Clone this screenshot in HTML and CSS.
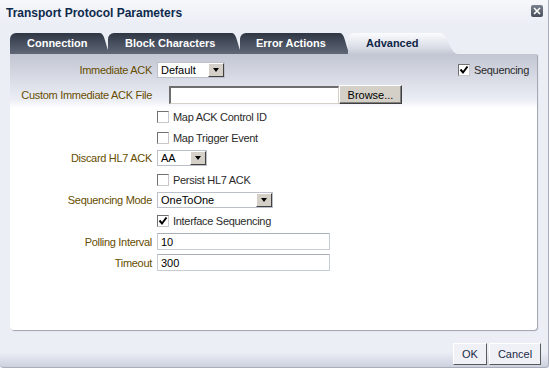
FILE: index.html
```html
<!DOCTYPE html>
<html lang="en">
<head>
  <meta charset="UTF-8" />
  <title>Transport Protocol Parameters</title>
  <link rel="stylesheet" href="styles.css">
</head>
<body>
  <div class="dialog">
    <div class="titlebar">
      <span class="title">Transport Protocol Parameters</span>
      <span class="close">
        <svg width="8" height="8" viewBox="0 0 8 8"><path d="M1 1 L7 7 M7 1 L1 7" stroke="#fff" stroke-width="1.6"/></svg>
      </span>
    </div>

    <div class="tabs">
      <div class="tab t-conn">Connection</div>
      <div class="tab t-block">Block Characters</div>
      <div class="tab t-err">Error Actions</div>
      <div class="tab t-adv active">Advanced</div>
    </div>

    <div class="panel">
      <div class="row first">
        <div class="label">Immediate ACK</div>
        <div class="select w-default"><span class="val">Default</span><span class="drop"><i class="arrow"></i></span></div>
        <div class="spacer"></div>
        <label class="check"><span class="cb on"><svg width="10" height="10" viewBox="0 0 10 10"><path d="M1.5 4.5 L4 7.5 L8.5 1.5" fill="none" stroke="#000" stroke-width="2"/></svg></span>Sequencing</label>
      </div>
      <div class="row r2">
        <div class="label">Custom Immediate ACK File</div>
        <input class="file" type="text" value="">
        <button class="browse">Browse...</button>
      </div>
      <div class="row r3 indent">
        <label class="check"><span class="cb"></span>Map ACK Control ID</label>
      </div>
      <div class="row indent">
        <label class="check"><span class="cb"></span>Map Trigger Event</label>
      </div>
      <div class="row up">
        <div class="label">Discard HL7 ACK</div>
        <div class="select w-aa"><span class="val">AA</span><span class="drop"><i class="arrow"></i></span></div>
      </div>
      <div class="row down indent">
        <label class="check"><span class="cb"></span>Persist HL7 ACK</label>
      </div>
      <div class="row up">
        <div class="label">Sequencing Mode</div>
        <div class="select w-mode"><span class="val">OneToOne</span><span class="drop"><i class="arrow"></i></span></div>
      </div>
      <div class="row indent">
        <label class="check"><span class="cb on"><svg width="10" height="10" viewBox="0 0 10 10"><path d="M1.5 4.5 L4 7.5 L8.5 1.5" fill="none" stroke="#000" stroke-width="2"/></svg></span>Interface Sequencing</label>
      </div>
      <div class="row">
        <div class="label">Polling Interval</div>
        <input class="text" type="text" value="10">
      </div>
      <div class="row">
        <div class="label">Timeout</div>
        <input class="text" type="text" value="300">
      </div>
    </div>

    <div class="footer">
      <button class="ok">OK</button>
      <button class="cancel">Cancel</button>
    </div>
  </div>
</body>
</html>
```

FILE: styles.css
```css
body {
  margin: 0;
  font-family: "Liberation Sans", Arial, sans-serif;
  font-size: 11px;
  background: #eceef6;
}
.dialog {
  width: 548px;
  height: 367px;
  border-right: 1px solid #a9adba;
  border-bottom: 1px solid #a9adba;
  border-radius: 0 0 4px 4px;
  background: linear-gradient(#f6f7fb 0, #eceef6 24px, #eceef6 352px, #cdd1df 367px);
  display: flex;
  flex-direction: column;
}
.titlebar {
  height: 26px;
  display: flex;
  align-items: center;
  justify-content: space-between;
  padding: 0 5px 0 6px;
}
.title {
  font-weight: bold;
  font-size: 12px;
  color: #0d2a4c;
}
.close {
  align-self: flex-start;
  margin-top: 5px;
  width: 12px;
  height: 12px;
  border-radius: 2px;
  background: linear-gradient(#7a818e, #474e5b);
  display: flex;
  align-items: center;
  justify-content: center;
}

/* tabs */
.tabs {
  display: flex;
  height: 21px;
  margin-top: 7px;
  padding-left: 10px;
}
.tab {
  position: relative;
  box-sizing: border-box;
  height: 21px;
  line-height: 21px;
  padding-left: 17px;
  margin-right: 8px;
  background: linear-gradient(#2f3745, #606878);
  color: #fff;
  font-weight: bold;
  font-size: 11px;
  border-top-left-radius: 6px;
  white-space: nowrap;
}
.tab::after {
  content: "";
  position: absolute;
  top: 0;
  right: -12px;
  width: 12px;
  height: 21px;
  background: inherit;
  clip-path: path("M0 0 C6 0 6 21 12 21 L0 21 Z");
}
.t-conn { width: 90px; }
.t-block { width: 124px; }
.t-err { width: 100px; padding-left: 16px; }
.t-adv { width: 92px; padding-left: 18px; }
.tab.active {
  background: linear-gradient(#fbfcfe, #dcdfe8 65%, #c5c9d5);
  color: #0e2547;
  z-index: 1;
}
.tab.active::after {
  right: -18px;
  width: 18px;
  clip-path: path("M0 0 C8 0 10 21 18 21 L0 21 Z");
}

/* panel */
.panel {
  margin: 0 11px 0 10px;
  height: 276px;
  box-sizing: border-box;
  padding-top: 5px;
  background: linear-gradient(#c2c6d2 0, #d6d9e3 22px, #eceef5 46px, #fff 54px);
  border-radius: 0 0 4px 4px;
  box-shadow: 1px 1px 1px rgba(60, 66, 80, 0.45);
}
.row {
  display: flex;
  align-items: center;
  height: 21px;
}
.row.first { padding-right: 8px; }
.row.r2 { margin-top: 4px; }
.row.r3 { margin-top: 1px; }
.row.up { margin-top: -1px; }
.row.down { margin-top: 1px; }
.row.indent { padding-left: 147px; }
.label {
  width: 147px;
  box-sizing: border-box;
  padding-right: 5px;
  text-align: right;
  color: #664d00;
  letter-spacing: -0.3px;
  white-space: nowrap;
}
.spacer { flex: 1; }

.check {
  display: flex;
  align-items: center;
  color: #2b2b2b;
  letter-spacing: -0.3px;
}
.cb {
  width: 12px;
  height: 12px;
  box-sizing: border-box;
  border: 1px solid;
  border-color: #707070 #c8c8c8 #c8c8c8 #707070;
  background: #fff;
  margin-right: 4px;
  display: flex;
  align-items: center;
  justify-content: center;
}

.select {
  display: flex;
  height: 16px;
  box-sizing: border-box;
  border: 1px solid #bcc0ca;
  background: #fff;
}
.select .val {
  flex: 1;
  padding-left: 3px;
  line-height: 14px;
  color: #000;
}
.select .drop {
  width: 16px;
  box-sizing: border-box;
  background: #d4d0c8;
  border: 1px solid;
  border-color: #fff #404040 #404040 #fff;
  display: flex;
  align-items: center;
  justify-content: center;
}
.arrow {
  width: 0;
  height: 0;
  border-left: 3.5px solid transparent;
  border-right: 3.5px solid transparent;
  border-top: 4px solid #000;
}
.w-default { width: 68px; }
.w-aa { width: 50px; }
.w-mode { width: 116px; }

input {
  font-family: inherit;
  font-size: 11px;
  color: #000;
  box-sizing: border-box;
  margin: 0;
  outline: none;
}
.file {
  margin-left: 12px;
  width: 170px;
  height: 18px;
  padding: 0 3px;
  border-style: solid;
  border-width: 2px 1px 1px 2px;
  border-color: #6e6e6e #d4d0c8 #d4d0c8 #6e6e6e;
}
.text {
  width: 173px;
  height: 17px;
  padding: 0 3px;
  border: 1px solid #c8ccd4;
  border-top-color: #a9aeb8;
}

button {
  font-family: inherit;
  font-size: 11px;
  padding: 0;
  margin: 0;
  cursor: pointer;
}
.browse {
  width: 63px;
  height: 19px;
  background: #d4d0c8;
  color: #000;
  border: 1px solid;
  border-color: #fff #404040 #404040 #fff;
  box-shadow: inset -1px -1px 0 #808080;
}

/* footer */
.footer {
  flex: 1;
  display: flex;
  justify-content: flex-end;
  align-items: flex-start;
  gap: 2px;
  padding: 13px 7px 0 0;
}
.footer button {
  height: 22px;
  background: #f0f1f6;
  color: #1b2a46;
  border: 1px solid;
  border-color: #fff #5a5a5a #5a5a5a #fff;
}
.ok { width: 34px; }
.cancel { width: 52px; }
```
